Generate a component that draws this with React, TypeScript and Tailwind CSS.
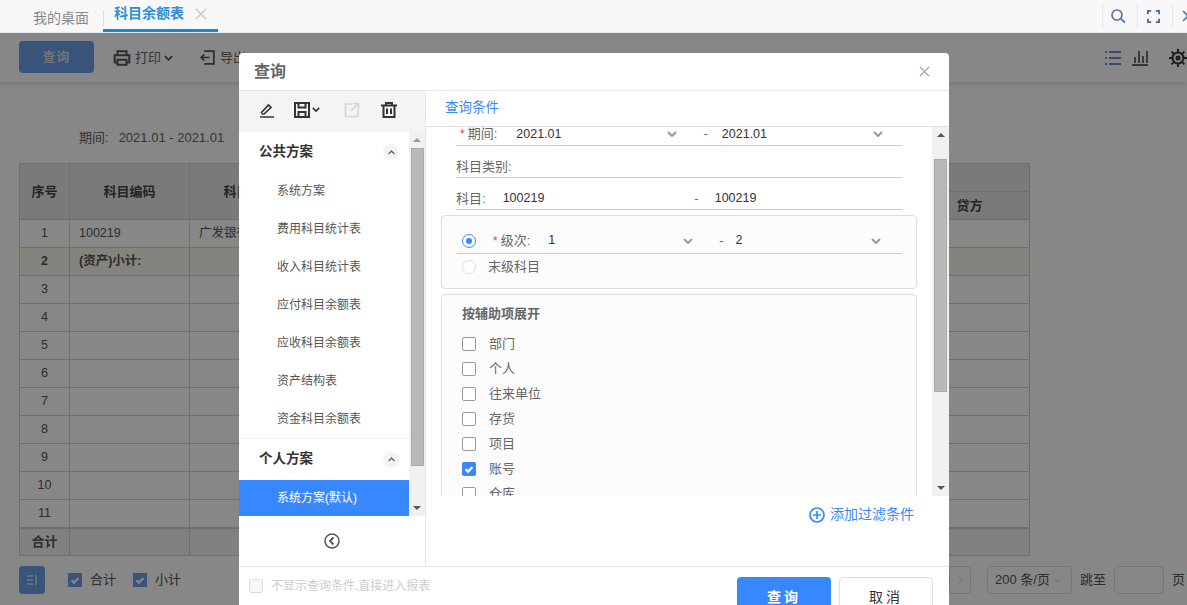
import React from "react";

const F = { fontFamily: '"Liberation Sans", "Noto Sans CJK SC", sans-serif' };

const Chev = ({ className = "", color = "#9a9a9a", w = 2 }: { className?: string; color?: string; w?: number }) => (
  <svg viewBox="0 0 10 6" className={className} fill="none" stroke={color} strokeWidth={w}>
    <path d="M1 1l4 4 4-4" />
  </svg>
);

const Check = () => (
  <svg viewBox="0 0 14 14" className="w-[14px] h-[14px]" fill="none" stroke="#fff" strokeWidth="2.2">
    <path d="M3.5 7.2l2.5 2.4 4.5-4.6" />
  </svg>
);

const Box = ({ label, checked }: { label: string; checked?: boolean }) => (
  <div className="flex items-center h-[25px] text-[13px] text-[#666]">
    <div className={"w-[14px] h-[14px] rounded-[2px] mr-[13px] " + (checked ? "bg-[#3788ff]" : "border border-[#999] bg-white")}>
      {checked && <Check />}
    </div>
    {label}
  </div>
);

const SideItem = ({ label }: { label: string }) => (
  <div className="h-[38px] flex items-center pl-[38px] text-[12px] text-[#555]">{label}</div>
);

const Up = () => (
  <div className="w-[16px] h-[16px] rounded-full bg-[#f3f3f3] flex items-center justify-center">
    <Chev className="w-[7px] h-[5px] rotate-180" color="#666" w={2} />
  </div>
);

const rows = [3, 4, 5, 6, 7, 8, 9, 10, 11];
const td = "border border-[#d0d0d0]";
const th = "border border-[#d0d0d0] bg-[#e6e6e6] text-[13px] font-bold text-[#444]";

export default function App() {
  return (
    <div className="relative w-[1187px] h-[605px] overflow-hidden bg-white" style={F}>
      {/* tab bar */}
      <div className="h-[33px] bg-[#f8f8f8] border-b border-[#e6eaf3] flex items-stretch">
        <div className="w-[103px] pl-[33px] pt-[10px] text-[14px] leading-[17px] text-[#888]">我的桌面</div>
        <div className="w-[115px] h-[32px] border-b-[3px] border-[#1a86d6] flex items-center pl-[11px] relative">
          <div className="absolute left-0 top-[10px] h-[16px] w-px bg-[#ddd]" />
          <span className="text-[14px] font-bold text-[#2a90de] leading-[17px] -mt-[2px]">科目余额表</span>
          <svg viewBox="0 0 12 12" className="w-[12px] h-[12px] ml-[11px] -mt-[2px]" stroke="#c8c8c8" strokeWidth="1.4">
            <path d="M1 1l10 10M11 1L1 11" />
          </svg>
        </div>
        <div className="flex-1" />
        <div className="w-[35px] flex items-center justify-center border-l border-[#e4e7ee] h-[24px] mt-[4px] pr-[4px]">
          <svg viewBox="0 0 16 16" className="w-[16px] h-[16px]" fill="none" stroke="#5b74a5" strokeWidth="1.7">
            <circle cx="7" cy="7" r="5" />
            <path d="M11 11l4 3.5" />
          </svg>
        </div>
        <div className="w-[35px] flex items-center justify-center border-l border-[#e4e7ee] h-[24px] mt-[4px] pr-[4px]">
          <svg viewBox="0 0 14 14" className="w-[13px] h-[13px]" fill="none" stroke="#4a6ba8" strokeWidth="2">
            <path d="M1 4.5V1h3.5M9.5 1H13v3.5M13 9.5V13H9.5M4.5 13H1V9.5" />
          </svg>
        </div>
        <div className="w-[15px] flex items-center border-l border-[#e4e7ee] h-[24px] mt-[4px] pl-[9px] overflow-hidden">
          <svg viewBox="0 0 8 12" className="w-[8px] h-[12px] shrink-0" fill="none" stroke="#5b74a5" strokeWidth="1.7">
            <path d="M1 1l5 5-5 5" />
          </svg>
        </div>
      </div>

      {/* toolbar */}
      <div className="h-[49px] bg-white shadow-[0_2px_4px_rgba(0,0,0,0.12)] flex items-center pl-[19px] text-[13px] text-[#666]">
        <div className="w-[75px] h-[32px] rounded-[4px] bg-[#6a9fe8] text-[#d5dbe6] flex items-center justify-center -mt-[1px] tracking-[1px] font-bold">查询</div>
        <svg viewBox="0 0 16 16" className="w-[18px] h-[18px] ml-[19px] mr-[4px]" fill="none" stroke="#555" strokeWidth="1.8">
          <path d="M4 5V2h8v3M4 12H1.500V5.500h13V12H12M4 9.500h8V14H4z" />
        </svg>
        <span>打印</span>
        <Chev className="w-[9px] h-[6px] ml-[3px]" color="#555" />
        <svg viewBox="0 0 16 16" className="w-[17px] h-[17px] ml-[26px] mr-[4px]" fill="none" stroke="#555" strokeWidth="1.6">
          <path d="M5 2h9v12H5M10 8H1.500M5 5L2 8l3 3" />
        </svg>
        <span>导出</span>
        <div className="flex-1" />
        <svg viewBox="0 0 16 16" className="w-[16px] h-[16px]" fill="none" stroke="#3c6fc4" strokeWidth="1.6">
          <path d="M0 2h2M4 2h12M0 8h2M4 8h12M0 14h2M4 14h12" />
        </svg>
        <svg viewBox="0 0 16 16" className="w-[16px] h-[16px] ml-[11px]" fill="none" stroke="#333" strokeWidth="1.4">
          <path d="M0 15h16M3 13V7M7 13V1M11 13V6M15 13V1" />
        </svg>
        <svg viewBox="0 0 18 18" className="w-[18px] h-[18px] ml-[21px] mr-[0px]" fill="none" stroke="#333" strokeWidth="2">
          <circle cx="9" cy="9" r="5.500" />
          <circle cx="9" cy="9" r="1.500" />
          <path d="M9 0v3.500M9 14.500V18M0 9h3.500M14.500 9H18M2.600 2.600l2.500 2.500M12.900 12.900l2.500 2.500M15.400 2.600l-2.500 2.500M5.100 12.900l-2.500 2.500" />
        </svg>
      </div>

      {/* body */}
      <div className="pl-[79px] pt-[48px] h-[33px] box-content text-[13px] leading-[16px] text-[#666]">
        期间:<span className="ml-[10px]">2021.01 - 2021.01</span>
      </div>
      <table className="table-fixed border-collapse w-[1011px] ml-[19px] text-[12.5px] text-[#555]">
        <colgroup>
          <col className="w-[50px]" />
          <col className="w-[120px]" />
          <col className="w-[120px]" />
          <col />
          <col className="w-[120px]" />
        </colgroup>
        <tbody>
          <tr className="h-[28px]">
            <td rowSpan={2} className={th + " text-center"}>序号</td>
            <td rowSpan={2} className={th + " text-center"}>科目编码</td>
            <td rowSpan={2} className={th + " text-center"}>科目名称</td>
            <td className={th} colSpan={2} />
          </tr>
          <tr className="h-[28px]">
            <td className={th} />
            <td className={th + " text-center"}>贷方</td>
          </tr>
          <tr className="h-[28px]">
            <td className={td + " text-center"}>1</td>
            <td className={td + " pl-[9px]"}>100219</td>
            <td className={td + " pl-[9px]"}>广发银行</td>
            <td className={td} />
            <td className={td} />
          </tr>
          <tr className="h-[28px] bg-[#f9f7ec] font-bold">
            <td className={td + " text-center"}>2</td>
            <td className={td + " pl-[9px]"}>(资产)小计:</td>
            <td className={td} />
            <td className={td} />
            <td className={td} />
          </tr>
          {rows.map((n) => (
            <tr key={n} className="h-[28px]">
              <td className={td + " text-center"}>{n}</td>
              <td className={td} />
              <td className={td} />
              <td className={td} />
              <td className={td} />
            </tr>
          ))}
          <tr className="h-[28px] bg-[#f4f4f4] font-bold border-t-2 border-[#d0d0d0]">
            <td className={td + " text-center text-[13px]"}>合计</td>
            <td className={td} />
            <td className={td} />
            <td className={td} />
            <td className={td} />
          </tr>
        </tbody>
      </table>

      {/* bottom bar */}
      <div className="flex items-center pl-[19px] mt-[10px] h-[28px] text-[13px] text-[#555]">
        <div className="w-[26px] h-[28px] rounded-[4px] bg-[#6a9fe8] flex items-center justify-center">
          <svg viewBox="0 0 12 12" className="w-[12px] h-[12px]" fill="none" stroke="#d5dce8" strokeWidth="1.6">
            <path d="M1 2h6M1 6h6M1 10h6M10 1v10" />
          </svg>
        </div>
        <div className="w-[14px] h-[14px] bg-[#6a9fe8] ml-[23px] mr-[8px]"><Check /></div>
        合计
        <div className="w-[14px] h-[14px] bg-[#6a9fe8] ml-[17px] mr-[8px]"><Check /></div>
        小计
        <div className="flex-1" />
        <div className="w-[22px] h-[28px] border border-[#ddd] rounded-[4px] flex items-center justify-end pr-[7px] text-[#bbb]">
          <svg viewBox="0 0 6 10" className="w-[5px] h-[9px]" fill="none" stroke="#ccc" strokeWidth="1.2"><path d="M1 1l4 4-4 4" /></svg>
        </div>
        <div className="w-[85px] h-[28px] border border-[#ddd] rounded-[4px] ml-[16px] flex items-center pl-[7px]">
          200 条/页
          <Chev className="w-[8px] h-[5px] ml-[4px]" color="#ccc" w={1} />
        </div>
        <span className="ml-[8px]">跳至</span>
        <div className="w-[50px] h-[28px] border border-[#ddd] rounded-[4px] ml-[8px]" />
        <span className="ml-[8px] mr-[2px]">页</span>
      </div>

      {/* overlay */}
      <div className="absolute left-0 right-0 top-[33px] bottom-0 bg-black/[0.47]" />

      {/* dialog */}
      <div className="absolute left-[239px] top-[53px] w-[710px] h-[600px] bg-white rounded-[4px] flex flex-col">
        <div className="h-[38px] border-b border-[#e8e8e8] flex items-center justify-between pl-[15px] pr-[19px] shrink-0">
          <span className="text-[16px] font-bold text-[#666]">查询</span>
          <svg viewBox="0 0 12 12" className="w-[11px] h-[11px]" stroke="#999" strokeWidth="1.2"><path d="M1 1l10 10M11 1L1 11" /></svg>
        </div>
        <div className="h-[475px] flex shrink-0">
          {/* left */}
          <div className="w-[187px] border-r border-[#e8e8e8] flex flex-col shrink-0">
            <div className="h-[41px] bg-[#f4f4f4] flex items-center pl-[20px] pb-[4px] shrink-0">
              <svg viewBox="0 0 16 16" className="w-[16px] h-[16px]" fill="none" stroke="#333" strokeWidth="1.700">
                <path d="M2 11l7.500-8 2.500 2.500L5 12H2.500M1 15h14" />
              </svg>
              <svg viewBox="0 0 16 16" className="w-[16px] h-[16px] ml-[19px]" fill="none" stroke="#333" strokeWidth="2">
                <path d="M1 1h14v14H1zM4.500 1v4.500h7V1M4.500 15v-5h7v5" />
              </svg>
              <Chev className="w-[8px] h-[5px] ml-[2px]" color="#333" />
              <svg viewBox="0 0 16 16" className="w-[16px] h-[16px] ml-[24px]" fill="none" stroke="#d4d4d4" strokeWidth="1.600">
                <path d="M8 2H1.500v12.500h12.500V8M9 1.500h5.500V7M14.500 1.500L7 9" />
              </svg>
              <svg viewBox="0 0 16 16" className="w-[16px] h-[16px] ml-[21px]" fill="none" stroke="#333" strokeWidth="2">
                <path d="M0 3.500h16M5 3.500V1h6v2.500M2.500 3.500v11.500h11V3.500M6 6.500V12M10 6.500V12" />
              </svg>
            </div>
            <div className="h-[384px] flex shrink-0">
              <div className="flex-1 overflow-hidden">
                <div className="h-[40px] flex items-center justify-between pl-[20px] pr-[10px] text-[13.5px] font-bold text-[#333]">
                  公共方案
                  <Up />
                </div>
                <SideItem label="系统方案" />
                <SideItem label="费用科目统计表" />
                <SideItem label="收入科目统计表" />
                <SideItem label="应付科目余额表" />
                <SideItem label="应收科目余额表" />
                <SideItem label="资产结构表" />
                <SideItem label="资金科目余额表" />
                <div className="h-[42px] border-t border-[#eee] flex items-center justify-between pl-[20px] pr-[10px] text-[13.5px] font-bold text-[#333]">
                  个人方案
                  <Up />
                </div>
                <div className="h-[36px] bg-[#3788ff] flex items-center pl-[38px] text-[12px] text-white">系统方案(默认)</div>
              </div>
              <div className="w-[16px] bg-[#f1f1f1] flex flex-col items-center shrink-0">
                <div className="h-[16px] flex items-center"><div className="w-0 h-0 border-x-[4px] border-x-transparent border-b-[4px] border-b-[#999]" /></div>
                <div className="w-[13px] h-[318px] bg-[#b9b9b9] border border-[#aaa]" />
                <div className="flex-1" />
                <div className="h-[16px] flex items-center"><div className="w-0 h-0 border-x-[4px] border-x-transparent border-t-[4px] border-t-[#555]" /></div>
              </div>
            </div>
            <div className="flex-1 flex items-center justify-center pr-[1px]">
              <svg viewBox="0 0 16 16" className="w-[16px] h-[16px]" fill="none" stroke="#555" strokeWidth="1.500">
                <circle cx="8" cy="8" r="7" />
                <path d="M9.500 4.500L6 8l3.500 3.500" strokeWidth="1.800" />
              </svg>
            </div>
          </div>

          {/* right */}
          <div className="flex-1 flex flex-col min-w-0">
            <div className="h-[36px] border-b border-[#e0e0e0] flex items-center pl-[19px] text-[13.5px] text-[#3788ff] shrink-0">查询条件</div>
            <div className="h-[369px] flex shrink-0">
              <div className="flex-1 overflow-hidden pl-[15px] text-[13px] text-[#666]">
                <div className="ml-[15px] w-[446px] h-[19px] border-b border-[#ccc] flex items-center pb-[4px]">
                  <span className="text-[#f33] ml-[4px] mr-[3px] text-[12px]">*</span>期间:
                  <span className="ml-[19px] text-[#333] text-[12.5px]">2021.01</span>
                  <Chev className="w-[10px] h-[6px] ml-[106px]" />
                  <span className="ml-[26px]">-</span>
                  <span className="ml-[14px] text-[#333] text-[12.5px]">2021.01</span>
                  <Chev className="w-[10px] h-[6px] ml-[106px]" />
                </div>
                <div className="ml-[15px] w-[446px] h-[32px] border-b border-[#ccc] flex items-center pt-[10px]">科目类别:</div>
                <div className="ml-[15px] w-[446px] h-[32px] border-b border-[#ccc] flex items-center pt-[10px]">
                  科目:
                  <span className="ml-[17px] text-[#333] text-[12.5px]">100219</span>
                  <span className="ml-[150px]">-</span>
                  <span className="ml-[16px] text-[#333] text-[12.5px]">100219</span>
                </div>
                <div className="w-[476px] h-[74px] mt-[5px] border border-[#ddd] rounded-[4px] bg-[#fcfcfc] px-[15px] pt-[14px]">
                  <div className="h-[24px] border-b border-[#ccc] flex items-center w-[445px] pb-[2px]">
                    <div className="w-[14px] h-[14px] rounded-full border border-[#3788ff] flex items-center justify-center ml-[5px] bg-white">
                      <div className="w-[6px] h-[6px] rounded-full bg-[#3788ff]" />
                    </div>
                    <span className="text-[#f33] ml-[17px] mr-[3px] text-[12px]">*</span>级次:
                    <span className="ml-[18px] text-[#333] text-[12.5px]">1</span>
                    <Chev className="w-[10px] h-[6px] ml-[128px]" />
                    <span className="ml-[26px]">-</span>
                    <span className="ml-[12px] text-[#333] text-[12.5px]">2</span>
                    <Chev className="w-[10px] h-[6px] ml-[128px]" />
                  </div>
                  <div className="h-[26px] flex items-center">
                    <div className="w-[14px] h-[14px] rounded-full border border-[#ddd] ml-[5px] bg-white mr-[12px]" />
                    末级科目
                  </div>
                </div>
                <div className="w-[476px] mt-[5px] border border-[#ddd] rounded-[4px] bg-[#fcfcfc] pl-[20px] pt-[10px] h-[240px]">
                  <div className="text-[13px] font-bold text-[#666] leading-[17px] mb-[9px]">按辅助项展开</div>
                  <Box label="部门" />
                  <Box label="个人" />
                  <Box label="往来单位" />
                  <Box label="存货" />
                  <Box label="项目" />
                  <Box label="账号" checked />
                  <Box label="仓库" />
                </div>
              </div>
              <div className="w-[17px] bg-[#f1f1f1] flex flex-col items-center shrink-0">
                <div className="h-[16px] flex items-center"><div className="w-0 h-0 border-x-[4px] border-x-transparent border-b-[4px] border-b-[#555]" /></div>
                <div className="w-[13px] h-[233px] bg-[#b9b9b9] border border-[#aaa] mt-[16px]" />
                <div className="flex-1" />
                <div className="h-[16px] flex items-center"><div className="w-0 h-0 border-x-[4px] border-x-transparent border-t-[4px] border-t-[#555]" /></div>
              </div>
            </div>
            <div className="flex justify-end pr-[35px] pt-[8px] items-center text-[14px] text-[#3788ff]">
              <svg viewBox="0 0 16 16" className="w-[16px] h-[16px] mr-[5px]" fill="none" stroke="#3788ff" strokeWidth="1.700">
                <circle cx="8" cy="8" r="7" />
                <path d="M4 8h8M8 4v8" />
              </svg>
              添加过滤条件
            </div>
          </div>
        </div>
        {/* footer */}
        <div className="border-t border-[#e8e8e8] flex pl-[10px] pr-[16px] pt-[10px]">
          <div className="flex items-start flex-1 text-[12px] text-[#ccc]">
            <div className="w-[14px] h-[14px] border border-[#ddd] rounded-[2px] bg-[#f7f7f7] mr-[8px] mt-[2px]" />
            不显示查询条件,直接进入报表
          </div>
          <div className="w-[94px] h-[40px] rounded-[4px] bg-[#3788ff] text-white text-[14px] font-bold flex items-center justify-center tracking-[3px] pt-[1px]">查询</div>
          <div className="w-[94px] h-[40px] rounded-[4px] border border-[#ddd] text-[#333] text-[14px] flex items-center justify-center ml-[8px] tracking-[3px] pt-[1px]">取消</div>
        </div>
      </div>
    </div>
  );
}
